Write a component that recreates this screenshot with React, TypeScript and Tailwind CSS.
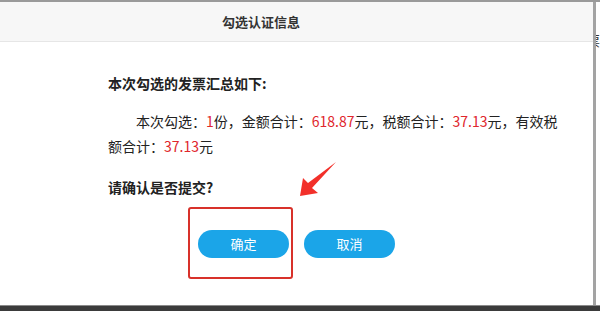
import React from "react";

const font = { fontFamily: '"Microsoft YaHei", "Noto Sans CJK SC", "Noto Sans", sans-serif' };

function Red({ children }: { children: React.ReactNode }) {
  return <span className="text-[#e0262c]">{children}</span>;
}

export default function App() {
  return (
    <div className="relative flex h-[311px] w-[600px] flex-col overflow-hidden bg-white text-[#222]" style={font}>
      <div className="h-[2px] shrink-0 bg-[#9a9a9a]" />
      <div className="flex min-h-0 flex-1">
        <div className="flex w-[593px] shrink-0 flex-col rounded-tr-[4px] bg-white">
          <div className="flex h-[40px] shrink-0 items-center border-b border-[#e6e6e6] bg-[#f7f7f7] pl-[222px]">
            <span className="text-[13px] font-bold text-[#333]">勾选认证信息</span>
          </div>
          <div className="pl-[108px] pr-[22px] pt-[29px] text-[14px]">
            <p className="font-bold leading-[25px]">本次勾选的发票汇总如下:</p>
            <p className="mt-[13px] indent-[28px] leading-[25px]">
              本次勾选：<Red>1</Red>份，金额合计：<Red>618.87</Red>元，税额合计：<Red>37.13</Red>元，有效税额合计：
              <Red>37.13</Red>元
            </p>
            <p className="mt-[16px] font-bold leading-[25px]">请确认是否提交?</p>
            <div className="mt-[30px] flex gap-[15px] pl-[90px]">
              <button className="h-[28px] w-[91px] rounded-full bg-[#1ba5e8] text-[13px] text-white">确定</button>
              <button className="h-[28px] w-[91px] rounded-full bg-[#1ba5e8] text-[13px] text-white">取消</button>
            </div>
          </div>
        </div>
        <div className="w-[3px] shrink-0 bg-[#a3a3a3]" />
        <div className="flex-1 overflow-hidden bg-white pt-[28px] text-[14px] text-[#333]">
          <span className="-ml-[10px] block">票</span>
        </div>
      </div>
      <div className="h-[1px] shrink-0 bg-[#8a8a8a]" />
      <div className="h-[5px] shrink-0 bg-[#3b3b3b]" />

      <div className="absolute left-[188px] top-[207px] h-[72px] w-[105px] rounded-[3px] border-2 border-[#d8312a]" />
      <svg className="absolute left-0 top-0" width="600" height="311" viewBox="0 0 600 311">
        <polygon points="336,162 312,188 318,193 300,196 303,178 308,183" fill="#f2302a" />
      </svg>
    </div>
  );
}
